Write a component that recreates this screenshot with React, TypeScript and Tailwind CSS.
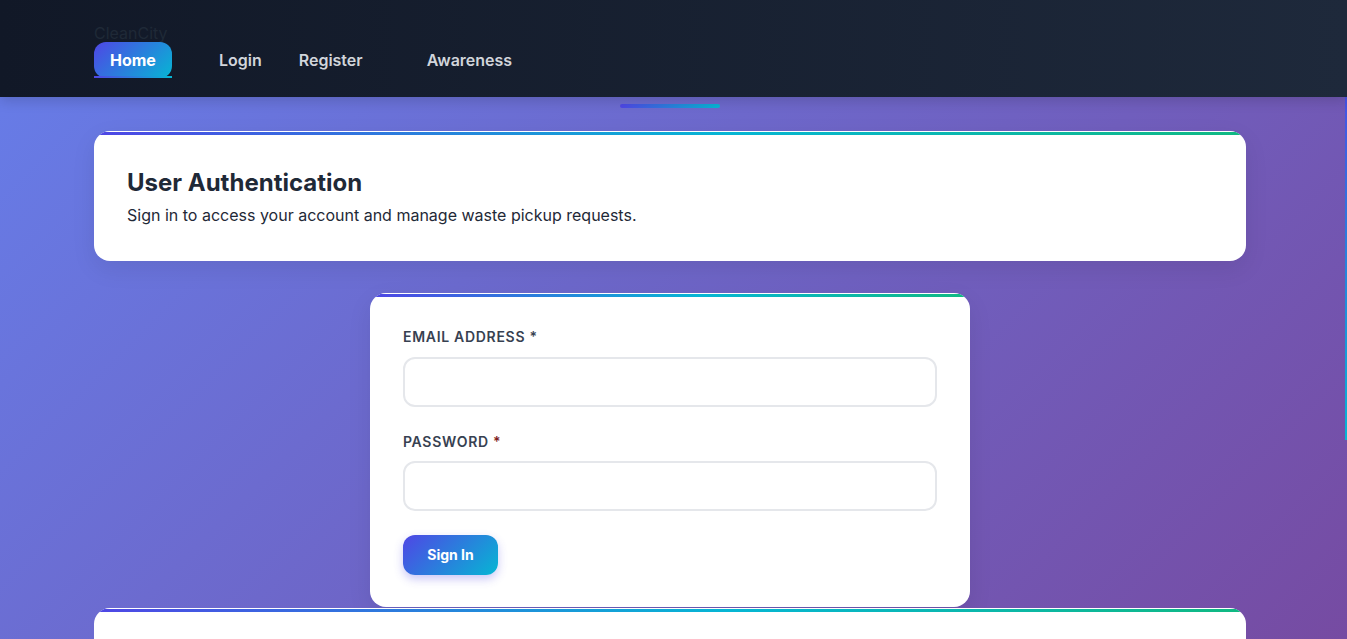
import React from 'react';

const navItems = [
  { label: 'Home', active: true, cls: '' },
  { label: 'Login', active: false, cls: 'ml-[31px]' },
  { label: 'Register', active: false, cls: 'ml-[5px]' },
  { label: 'Awareness', active: false, cls: 'ml-[32px]' },
];

const CardTop: React.FC = () => (
  <div className="mt-px h-[3px] bg-[linear-gradient(90deg,#4f46e5_0%,#06b6d4_55%,#10b981_100%)]" />
);

const App: React.FC = () => {
  return (
    <div
      className="relative h-[639px] overflow-hidden bg-[linear-gradient(135deg,#667eea_0%,#764ba2_100%)]"
      style={{ fontFamily: 'Inter, "Noto Sans", sans-serif' }}
    >
      <header className="relative z-10 h-[97px] bg-[linear-gradient(90deg,#111827_0%,#1e293b_100%)] pl-[94px] pt-[25px] shadow-[0_4px_12px_rgba(0,0,0,0.15)]">
        <div className="text-base leading-[17px] text-[#1f2937]">CleanCity</div>
        <nav className="flex items-center">
          {navItems.map((item) => (
            <a
              key={item.label}
              className={
                item.active
                  ? 'relative rounded-xl bg-[linear-gradient(135deg,#4f46e5_0%,#06b6d4_100%)] px-4 py-1.5 text-base font-bold leading-6 text-white'
                  : `px-4 py-1.5 text-base font-semibold leading-6 text-[#d1d5db] ${item.cls}`
              }
            >
              {item.label}
              {item.active && (
                <span className="absolute inset-x-0 bottom-0 h-0.5 bg-[linear-gradient(90deg,#4f46e5,#06b6d4)]" />
              )}
            </a>
          ))}
        </nav>
      </header>

      <div className="absolute right-0 top-[55px] h-[385px] w-0.5 bg-[linear-gradient(180deg,#4f46e5_0%,#06b6d4_100%)]" />

      <main className="w-[1340px] px-[94px]">
        <div className="mx-auto mt-[7px] h-1 w-[100px] rounded-full bg-[linear-gradient(90deg,#4f46e5,#06b6d4)]" />

        <section className="mt-[23px] overflow-hidden rounded-2xl bg-white shadow-[0_8px_24px_rgba(0,0,0,0.08)]">
          <CardTop />
          <div className="px-[33px] pb-[34px] pt-8">
            <h1 className="text-2xl font-bold leading-8 text-[#1f2937]">User Authentication</h1>
            <p className="mt-1 text-base leading-6 text-[#1f2937]">
              Sign in to access your account and manage waste pickup requests.
            </p>
          </div>
        </section>

        <section className="mx-auto mt-8 w-[600px] overflow-hidden rounded-2xl bg-white shadow-[0_8px_24px_rgba(0,0,0,0.08)]">
          <CardTop />
          <form className="px-[33px] pb-8 pt-[30px]">
            <label className="block text-sm font-semibold uppercase leading-5 tracking-[0.05em] text-[#374151]">
              Email Address <span className="text-[#374151]">*</span>
            </label>
            <input
              type="email"
              className="mt-2.5 block h-[50px] w-full rounded-xl border-2 border-[#e5e7eb] bg-white px-4 text-base outline-none"
            />
            <label className="mt-[25px] block text-sm font-semibold uppercase leading-5 tracking-[0.05em] text-[#374151]">
              Password <span className="text-[#7f1d1d]">*</span>
            </label>
            <input
              type="password"
              className="mt-[9px] block h-[50px] w-full rounded-xl border-2 border-[#e5e7eb] bg-white px-4 text-base outline-none"
            />
            <button
              type="button"
              className="mt-6 h-10 w-[95px] rounded-xl bg-[linear-gradient(135deg,#4f46e5_0%,#06b6d4_100%)] text-sm font-bold text-white shadow-[0_4px_10px_rgba(79,70,229,0.3)]"
            >
              Sign In
            </button>
          </form>
        </section>

        <section className="mt-px h-[200px] overflow-hidden rounded-2xl bg-white">
          <CardTop />
        </section>
      </main>
    </div>
  );
};

export default App;
